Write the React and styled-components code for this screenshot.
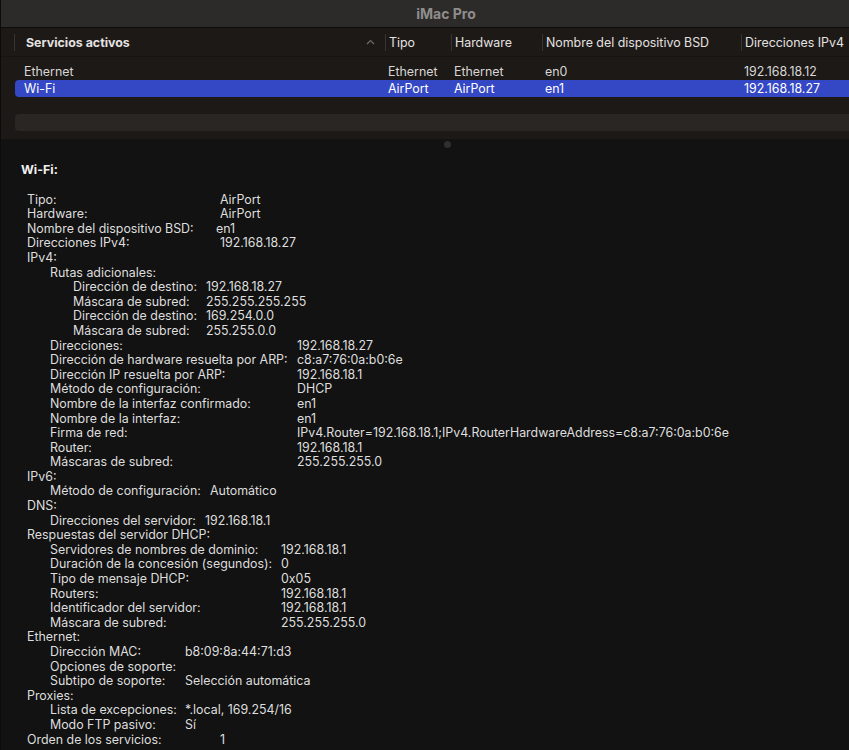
import React from 'react';
import styled, { createGlobalStyle } from 'styled-components';

const GlobalStyle = createGlobalStyle`
  html, body {
    margin: 0;
    padding: 0;
    background: #121212;
  }
  body {
    font-family: Inter, "Noto Sans", "Liberation Sans", sans-serif;
    font-size: 12.4px;
    color: #dedede;
    -webkit-font-smoothing: antialiased;
  }
`;

const Window = styled.div`
  width: 849px;
  height: 750px;
  overflow: hidden;
  display: flex;
  flex-direction: column;
  background: #121212;
  border-left: 1px solid #0b0b0b;
  box-sizing: border-box;
`;

const TitleBar = styled.div`
  height: 27px;
  flex: none;
  display: flex;
  align-items: center;
  justify-content: center;
  padding-left: 42px;
  background: #2d2b2a;
  border-bottom: 1px solid #0e0c0b;
  color: #8f8d8c;
  font-weight: 700;
  font-size: 14px;
`;

const TablePane = styled.div`
  height: 111px;
  flex: none;
  background: #1d1917;
  display: flex;
  flex-direction: column;
`;

const cols = '13px 371px 66px 91px 199px 1fr';

const HeaderRow = styled.div`
  height: 28px;
  display: grid;
  grid-template-columns: ${cols};
  align-items: center;
  border-bottom: 1px solid #171311;
  color: #e4e2e1;
`;

const HeadCell = styled.div`
  position: relative;
  height: 17px;
  display: flex;
  align-items: center;
  padding-left: ${p => p.$pad || 3}px;
  border-left: 1px solid #3a3533;
  font-weight: ${p => (p.$bold ? 700 : 400)};
  white-space: nowrap;
`;

const Chevron = styled.svg`
  position: absolute;
  right: 10px;
  top: 5px;
`;

const Rows = styled.div`
  padding-top: 6px;
  display: flex;
  flex-direction: column;
`;

const Row = styled.div`
  height: 17px;
  margin-left: 14px;
  display: grid;
  grid-template-columns: 370px 66px 91px 199px 1fr;
  align-items: center;
  border-radius: 4px 0 0 4px;
  background: ${p => (p.$selected ? '#3447c4' : p.$striped ? '#2a2624' : 'transparent')};
  color: ${p => (p.$selected ? '#ffffff' : '#d9d7d6')};
`;

const Cell = styled.div`
  padding-left: ${p => p.$pad || 3}px;
  white-space: nowrap;
`;

const DetailPane = styled.div`
  flex: 1;
  position: relative;
  padding: 24px 0 0 20px;
  line-height: 14.6px;
`;

const Handle = styled.div`
  position: absolute;
  top: 2px;
  left: 443px;
  width: 7px;
  height: 7px;
  border-radius: 50%;
  background: #2f2f2f;
`;

const PaneTitle = styled.div`
  font-weight: 700;
  color: #f0f0f0;
  margin-bottom: 15px;
`;

const Section = styled.div`
  margin-left: ${p => p.$indent}px;
  display: flex;
  flex-direction: column;
`;

const Line = styled.div`
  display: flex;
  white-space: nowrap;
  height: 14.6px;
`;

const Label = styled.span`
  flex: none;
  width: ${p => p.$w}px;
`;

const Value = styled.span`
  flex: none;
  margin-left: ${p => p.$nudge || 0}px;
`;

const detail = {
  col: 219,
  items: [
    { l: 'Tipo:', v: 'AirPort' },
    { l: 'Hardware:', v: 'AirPort' },
    { l: 'Nombre del dispositivo BSD:', v: 'en1', nudge: -4 },
    { l: 'Direcciones IPv4:', v: '192.168.18.27' },
    {
      l: 'IPv4:',
      sub: {
        col: 296,
        items: [
          {
            l: 'Rutas adicionales:',
            sub: {
              col: 205,
              items: [
                { l: 'Dirección de destino:', v: '192.168.18.27' },
                { l: 'Máscara de subred:', v: '255.255.255.255' },
                { l: 'Dirección de destino:', v: '169.254.0.0' },
                { l: 'Máscara de subred:', v: '255.255.0.0' },
              ],
            },
          },
          { l: 'Direcciones:', v: '192.168.18.27' },
          { l: 'Dirección de hardware resuelta por ARP:', v: 'c8:a7:76:0a:b0:6e' },
          { l: 'Dirección IP resuelta por ARP:', v: '192.168.18.1' },
          { l: 'Método de configuración:', v: 'DHCP' },
          { l: 'Nombre de la interfaz confirmado:', v: 'en1' },
          { l: 'Nombre de la interfaz:', v: 'en1' },
          { l: 'Firma de red:', v: 'IPv4.Router=192.168.18.1;IPv4.RouterHardwareAddress=c8:a7:76:0a:b0:6e' },
          { l: 'Router:', v: '192.168.18.1' },
          { l: 'Máscaras de subred:', v: '255.255.255.0' },
        ],
      },
    },
    {
      l: 'IPv6:',
      sub: { col: 209, items: [{ l: 'Método de configuración:', v: 'Automático' }] },
    },
    {
      l: 'DNS:',
      sub: { col: 204, items: [{ l: 'Direcciones del servidor:', v: '192.168.18.1' }] },
    },
    {
      l: 'Respuestas del servidor DHCP:',
      sub: {
        col: 280,
        items: [
          { l: 'Servidores de nombres de dominio:', v: '192.168.18.1' },
          { l: 'Duración de la concesión (segundos):', v: '0' },
          { l: 'Tipo de mensaje DHCP:', v: '0x05' },
          { l: 'Routers:', v: '192.168.18.1' },
          { l: 'Identificador del servidor:', v: '192.168.18.1' },
          { l: 'Máscara de subred:', v: '255.255.255.0' },
        ],
      },
    },
    {
      l: 'Ethernet:',
      sub: {
        col: 184,
        items: [
          { l: 'Dirección MAC:', v: 'b8:09:8a:44:71:d3' },
          { l: 'Opciones de soporte:', v: '' },
          { l: 'Subtipo de soporte:', v: 'Selección automática' },
        ],
      },
    },
    {
      l: 'Proxies:',
      sub: {
        col: 184,
        items: [
          { l: 'Lista de excepciones:', v: '*.local, 169.254/16' },
          { l: 'Modo FTP pasivo:', v: 'Sí' },
        ],
      },
    },
    { l: 'Orden de los servicios:', v: '1' },
  ],
};

// each nesting level shares one value column, given as an x on the page
function DetailSection({ data, x, indent }) {
  const w = data.col - x;
  return (
    <Section $indent={indent}>
      {data.items.map((it, i) => (
        <React.Fragment key={i}>
          <Line>
            <Label $w={w}>{it.l}</Label>
            {it.v && <Value $nudge={it.nudge}>{it.v}</Value>}
          </Line>
          {it.sub && <DetailSection data={it.sub} x={x + 23} indent={23} />}
        </React.Fragment>
      ))}
    </Section>
  );
}

const services = [
  { name: 'Ethernet', tipo: 'Ethernet', hw: 'Ethernet', bsd: 'en0', ip: '192.168.18.12' },
  { name: 'Wi-Fi', tipo: 'AirPort', hw: 'AirPort', bsd: 'en1', ip: '192.168.18.27', selected: true },
];

export default function App() {
  return (
    <Window>
      <GlobalStyle />
      <TitleBar>iMac Pro</TitleBar>
      <TablePane>
        <HeaderRow>
          <div />
          <HeadCell $pad={11} $bold>
            Servicios activos
            <Chevron width="9" height="6" viewBox="0 0 9 6">
              <path d="M1 5 L4.5 1.5 L8 5" fill="none" stroke="#6f6a68" strokeWidth="1.2" />
            </Chevron>
          </HeadCell>
          <HeadCell>Tipo</HeadCell>
          <HeadCell>Hardware</HeadCell>
          <HeadCell>Nombre del dispositivo BSD</HeadCell>
          <HeadCell>Direcciones IPv4</HeadCell>
        </HeaderRow>
        <Rows>
          {services.map((s, i) => (
            <Row key={s.name} $selected={s.selected} $striped={i % 2 === 1}>
              <Cell $pad={9}>{s.name}</Cell>
              <Cell>{s.tipo}</Cell>
              <Cell>{s.hw}</Cell>
              <Cell>{s.bsd}</Cell>
              <Cell>{s.ip}</Cell>
            </Row>
          ))}
          <Row />
          <Row $striped />
        </Rows>
      </TablePane>
      <DetailPane>
        <Handle />
        <PaneTitle>Wi-Fi:</PaneTitle>
        <DetailSection data={detail} x={26} indent={6} />
      </DetailPane>
    </Window>
  );
}
